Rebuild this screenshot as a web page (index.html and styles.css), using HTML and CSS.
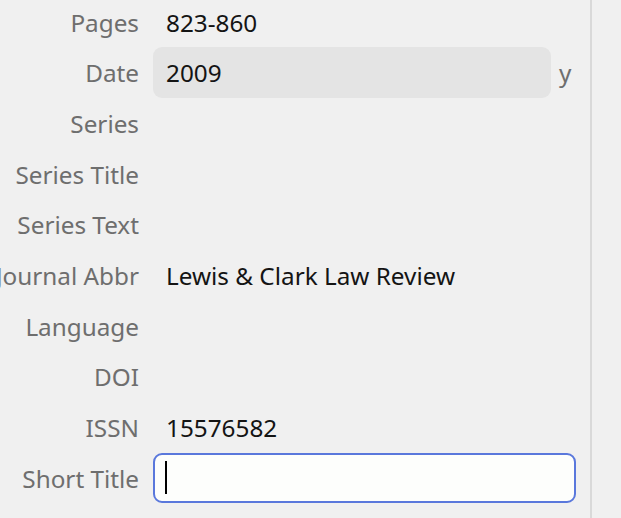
FILE: index.html
```html
<!DOCTYPE html>
<html>
<head>
<meta charset="utf-8">
<link rel="stylesheet" href="styles.css">
</head>
<body>
<div class="pane">
  <div class="form">
    <div class="label"><span>Pages</span></div>
    <div class="value"><span class="text">823-860</span></div>

    <div class="label"><span>Date</span></div>
    <div class="value date-row">
      <div class="field filled"><span class="text">2009</span></div>
      <span class="suffix">y</span>
    </div>

    <div class="label"><span>Series</span></div>
    <div class="value"></div>

    <div class="label"><span>Series Title</span></div>
    <div class="value"></div>

    <div class="label"><span>Series Text</span></div>
    <div class="value"></div>

    <div class="label"><span>Journal Abbr</span></div>
    <div class="value"><span class="text">Lewis &amp; Clark Law Review</span></div>

    <div class="label"><span>Language</span></div>
    <div class="value"></div>

    <div class="label"><span>DOI</span></div>
    <div class="value"></div>

    <div class="label"><span>ISSN</span></div>
    <div class="value"><span class="text">15576582</span></div>

    <div class="label"><span>Short Title</span></div>
    <div class="value">
      <div class="field focused"><span class="caret"></span></div>
    </div>
  </div>
</div>
</body>
</html>
```

FILE: styles.css
```css
html, body {
  margin: 0;
  padding: 0;
  background: #f0f0f0;
  height: 100%;
  overflow: hidden;
}

body {
  font-family: "Noto Sans", "Open Sans", sans-serif;
  font-size: 24.3px;
}

.pane {
  width: 590px;
  height: 100%;
  border-right: 2px solid #d9d9d9;
  overflow: hidden;
}

.form {
  margin-top: -3.67px;
  display: grid;
  grid-template-columns: 139px 1fr;
  grid-auto-rows: 50.67px;
  column-gap: 14px;
  padding-right: 14px;
}

.label {
  display: flex;
  align-items: center;
  justify-content: flex-end;
  color: #6e6e6e;
  white-space: nowrap;
  min-width: 0;
  padding-top: 1px;
}

.label span {
  flex: none;
}

.value {
  display: flex;
  align-items: center;
  min-width: 0;
  padding-top: 1px;
}

.text {
  padding-left: 13px;
  color: #141414;
  white-space: nowrap;
}

.field {
  flex: 1;
  height: 51px;
  box-sizing: border-box;
  border-radius: 9px;
  display: flex;
  align-items: center;
  margin-top: -1px;
  padding-top: 1px;
}

.field.filled {
  background: #e4e4e4;
}

.suffix {
  width: 25px;
  padding-left: 8px;
  box-sizing: border-box;
  color: #6e6e6e;
}

.field.focused {
  height: 50px;
  background: #fdfefc;
  border: 2px solid #5a78dc;
  padding-left: 10px;
  padding-top: 0;
}

.caret {
  width: 2px;
  height: 33px;
  background: #000;
}
```
